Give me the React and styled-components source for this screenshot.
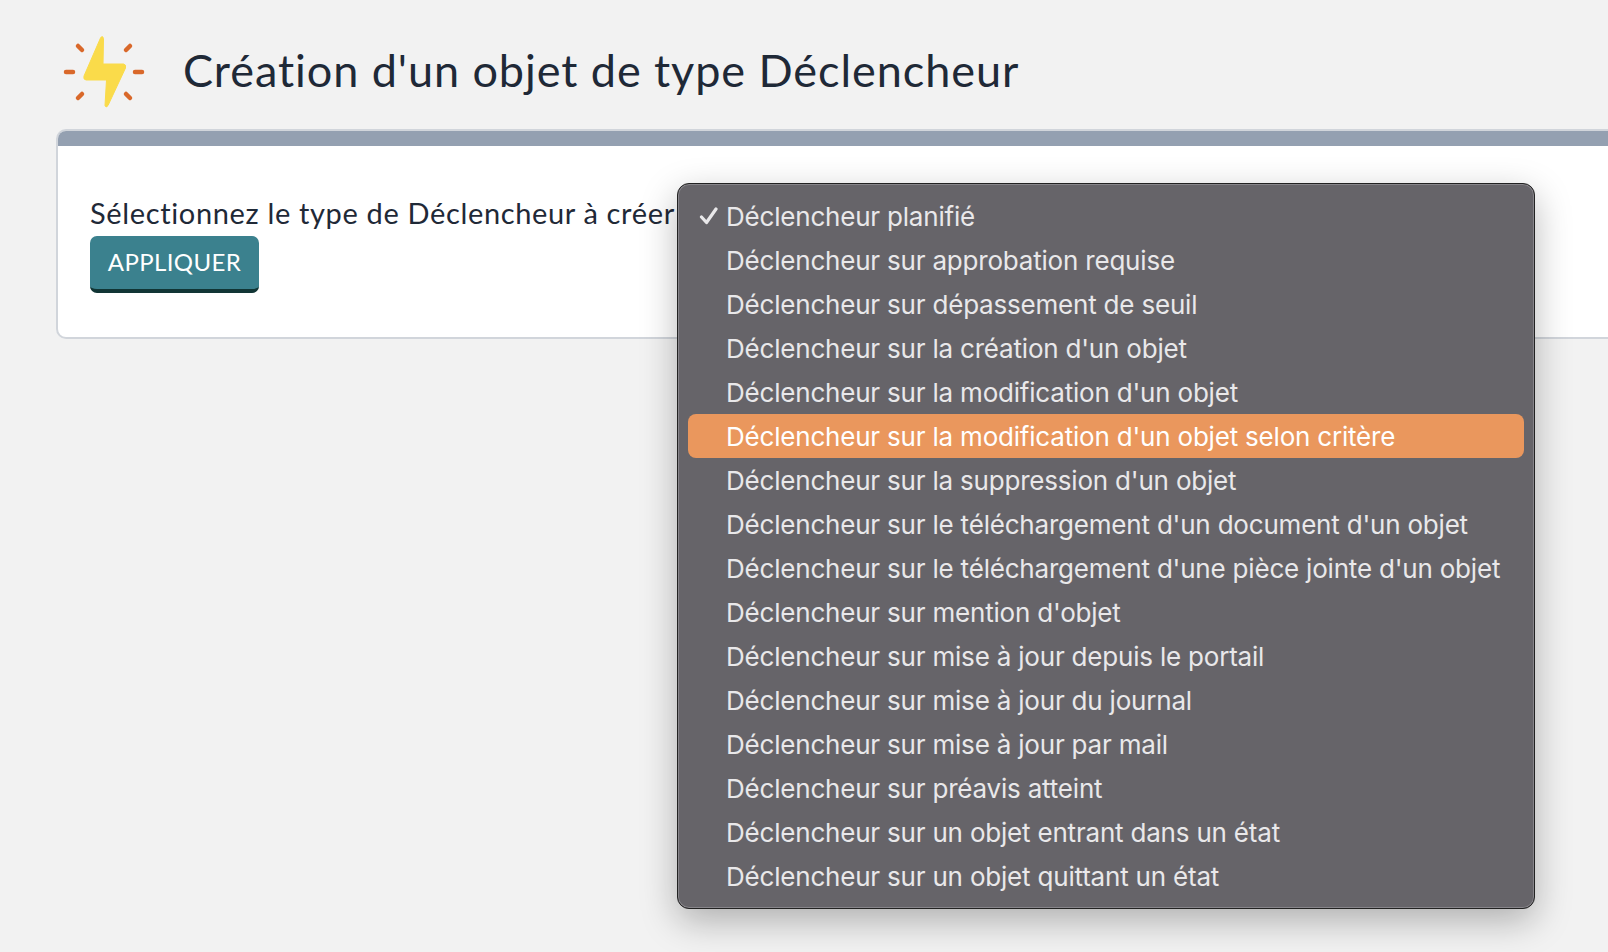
import React from 'react';
import styled, { createGlobalStyle } from 'styled-components';

const GlobalStyle = createGlobalStyle`
    html, body {
        margin: 0;
        padding: 0;
        height: 100%;
        overflow: hidden;
        background: #f2f2f2;
    }
    body {
        font-family: "Lato", "Open Sans", sans-serif;
        color: #1f2937;
    }
`;

const Page = styled.div`
    width: 1608px;
    height: 952px;
    overflow: hidden;
    position: relative;
    padding: 34px 0 0 56px;
    box-sizing: border-box;
`;

const Header = styled.div`
    display: flex;
    align-items: center;
    gap: 38px;
    height: 76px;
    padding-left: 7px;
    margin-bottom: 19px;
`;

const Title = styled.h1`
    margin: 0 0 3px;
    font-size: 45px;
    font-weight: 400;
    letter-spacing: 0.93px;
    line-height: 1;
    color: #1f2937;
    white-space: nowrap;
`;

const Card = styled.div`
    width: 1640px;
    height: 210px;
    box-sizing: border-box;
    border: 2px solid #d1d5db;
    border-radius: 10px;
    background: #fff;
    overflow: hidden;
`;

const CardBar = styled.div`
    height: 15px;
    background: #94a0b1;
`;

const CardBody = styled.div`
    padding: 50px 32px 0;
`;

const Label = styled.div`
    font-size: 29px;
    line-height: 34px;
    letter-spacing: 0.65px;
    color: #1f2937;
`;

const ApplyButton = styled.button`
    display: block;
    margin-top: 6px;
    width: 169px;
    height: 57px;
    padding: 0 0 2px;
    border: 0;
    border-bottom: 4px solid #113535;
    border-radius: 7px;
    background: #3b818e;
    color: #fff;
    font-family: inherit;
    font-size: 24px;
    letter-spacing: 0.4px;
    text-transform: uppercase;
`;

const Menu = styled.ul`
    position: absolute;
    left: 677px;
    top: 183px;
    width: 858px;
    height: 726px;
    box-sizing: border-box;
    margin: 0;
    padding: 10px;
    list-style: none;
    background: #666469;
    border: 1px solid #222;
    border-radius: 12px;
    box-shadow: inset 0 0 0 1px #87858a, 0 12px 36px rgba(0, 0, 0, 0.28);
    font-family: "Inter", "Noto Sans", sans-serif;
`;

const MenuItem = styled.li`
    position: relative;
    height: 44px;
    padding-left: 38px;
    display: flex;
    align-items: center;
    border-radius: 8px;
    font-size: 26px;
    letter-spacing: -0.2px;
    white-space: nowrap;
    color: ${({ $active }) => ($active ? '#fff' : '#e9e8ea')};
    background: ${({ $active }) => ($active ? '#ea975d' : 'transparent')};
`;

const Check = styled.svg`
    position: absolute;
    left: 11px;
    top: 13px;
`;

const options = [
    "Déclencheur planifié",
    "Déclencheur sur approbation requise",
    "Déclencheur sur dépassement de seuil",
    "Déclencheur sur la création d'un objet",
    "Déclencheur sur la modification d'un objet",
    "Déclencheur sur la modification d'un objet selon critère",
    "Déclencheur sur la suppression d'un objet",
    "Déclencheur sur le téléchargement d'un document d'un objet",
    "Déclencheur sur le téléchargement d'une pièce jointe d'un objet",
    "Déclencheur sur mention d'objet",
    "Déclencheur sur mise à jour depuis le portail",
    "Déclencheur sur mise à jour du journal",
    "Déclencheur sur mise à jour par mail",
    "Déclencheur sur préavis atteint",
    "Déclencheur sur un objet entrant dans un état",
    "Déclencheur sur un objet quittant un état",
];

const BoltIcon = () => (
    <svg width="82" height="74" viewBox="0 0 82 74">
        <path
            d="M37.5 3 Q39.5 0 40.5 3.5 L40 29 H60.5 Q63.5 29.5 62.5 33 L45 70.5 Q43 73.5 42 70.5 L43.5 45 H23 Q20 44.5 21 41 Z"
            fill="#fadb4a"
            stroke="#fadb4a"
            strokeWidth="1"
            strokeLinejoin="round"
        />
        <g stroke="#d9682a" strokeWidth="4.5" strokeLinecap="round" fill="none">
            <path d="M3 37 H10" />
            <path d="M72 37 H79" />
            <path d="M15 11 L19 15" />
            <path d="M67 11 L63 15" />
            <path d="M15 63 L19 59" />
            <path d="M67 63 L63 59" />
        </g>
    </svg>
);

const App = () => {
    return (
        <Page>
            <GlobalStyle />
            <Header>
                <BoltIcon />
                <Title>Création d'un objet de type Déclencheur</Title>
            </Header>
            <Card>
                <CardBar />
                <CardBody>
                    <Label>Sélectionnez le type de Déclencheur à créer</Label>
                    <ApplyButton>Appliquer</ApplyButton>
                </CardBody>
            </Card>
            <Menu>
                {options.map((name, i) => (
                    <MenuItem key={name} $active={i === 5}>
                        {i === 0 && (
                            <Check width="20" height="18" viewBox="0 0 20 18">
                                <path d="M2.5 10 L7.5 15.5 L17 2" fill="none" stroke="#e9e8ea" strokeWidth="3.2" strokeLinecap="round" strokeLinejoin="round" />
                            </Check>
                        )}
                        {name}
                    </MenuItem>
                ))}
            </Menu>
        </Page>
    );
};

export default App;
